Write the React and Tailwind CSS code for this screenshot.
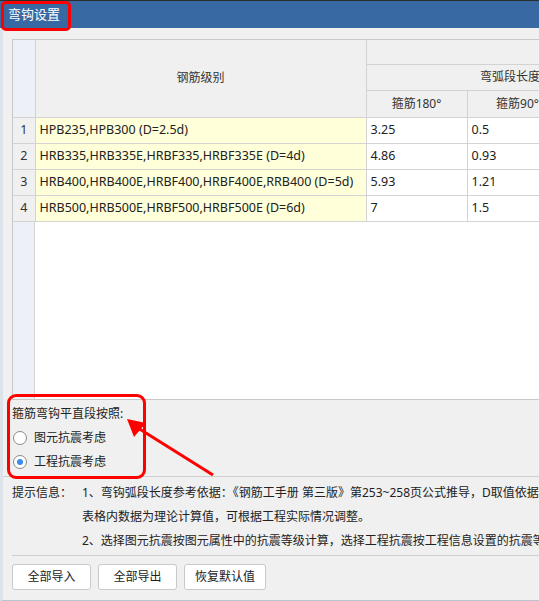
import React from 'react';

const rows = [
  { n: 1, grade: 'HPB235,HPB300 (D=2.5d)', a: '3.25', b: '0.5' },
  { n: 2, grade: 'HRB335,HRB335E,HRBF335,HRBF335E (D=4d)', a: '4.86', b: '0.93' },
  { n: 3, grade: 'HRB400,HRB400E,HRBF400,HRBF400E,RRB400 (D=5d)', a: '5.93', b: '1.21' },
  { n: 4, grade: 'HRB500,HRB500E,HRBF500,HRBF500E (D=6d)', a: '7', b: '1.5' },
];

function Radio({ checked, label }) {
  return (
    <label className="flex items-center h-6 gap-[7px] pl-[1px]">
      <span className="w-[14px] h-[14px] rounded-full border border-[#8a8a8a] bg-white flex items-center justify-center">
        {checked && <span className="w-[6px] h-[6px] rounded-full bg-[#3b8cf0]" />}
      </span>
      <span>{label}</span>
    </label>
  );
}

export default function App() {
  const font = { fontFamily: '"Noto Sans", "Noto Sans CJK SC", sans-serif' };
  return (
    <div className="relative w-[539px] h-[601px] overflow-hidden bg-[#f0f0f0] text-[12px] text-[#222]" style={font}>
      {/* Title bar */}
      <div className="h-[28px] bg-[#3869a2] border-t border-[#2c2c2c] flex items-center pl-[8px] text-white text-[13px]">
        弯钩设置
      </div>

      <div className="border-l-[3px] border-[#dde3ea] border-b border-b-[#b9c3cf] h-[573px] flex flex-col pl-[9px]">
        {/* Grid */}
        <div className="mt-[11px] h-[361px] w-[560px] border-t border-l border-[#c8c8c8] border-b bg-white flex flex-col">
          <table className="border-collapse table-fixed text-[12.5px]" style={{ width: 655 }}>
            <colgroup>
              <col style={{ width: 22 }} />
              <col style={{ width: 331 }} />
              <col style={{ width: 101 }} />
              <col style={{ width: 101 }} />
              <col style={{ width: 100 }} />
            </colgroup>
            <thead>
              <tr className="h-[24px]">
                <th rowSpan={3} className="bg-[#edf1f7] border-r border-b border-[#d3d3d3]" />
                <th rowSpan={3} className="bg-[#f0f0f0] border-r border-b border-[#d3d3d3] font-normal text-[12px] text-[#333]">钢筋级别</th>
                <th colSpan={3} className="bg-[#f0f0f0] border-b border-[#d3d3d3]" />
              </tr>
              <tr className="h-[26px]">
                <th colSpan={3} className="bg-[#f0f0f0] border-b border-[#d3d3d3] font-normal text-[12px] text-[#333] whitespace-nowrap">弯弧段长度(d)</th>
              </tr>
              <tr className="h-[27px]">
                <th className="bg-[#f0f0f0] border-r border-b border-[#d3d3d3] font-normal text-[12px] text-[#333]">箍筋180°</th>
                <th className="bg-[#f0f0f0] border-r border-b border-[#d3d3d3] font-normal text-[12px] text-[#333]">箍筋90°</th>
                <th className="bg-[#f0f0f0] border-b border-[#d3d3d3] font-normal text-[12px] text-[#333]">直筋</th>
              </tr>
            </thead>
            <tbody>
              {rows.map((r) => (
                <tr key={r.n} className="h-[26px]">
                  <td className="bg-[#f0f0f0] border-r border-b border-[#d3d3d3] text-center text-[#333]">{r.n}</td>
                  <td className="bg-[#ffffd9] border-r border-b border-[#d3d3d3] pl-[4px] whitespace-nowrap">{r.grade}</td>
                  <td className="border-r border-b border-[#d3d3d3] pl-[4px]">{r.a}</td>
                  <td className="border-r border-b border-[#d3d3d3] pl-[4px]">{r.b}</td>
                  <td className="border-b border-[#d3d3d3]" />
                </tr>
              ))}
            </tbody>
          </table>
          <div className="flex-1 flex">
            <div className="w-[22px] bg-[#edf1f7] border-r border-[#d3d3d3]" />
            <div className="flex-1 bg-white" />
          </div>
        </div>

        {/* Option group */}
        <div className="pt-[2px] pb-[2px]">
          <div className="h-6 flex items-center">箍筋弯钩平直段按照:</div>
          <Radio label="图元抗震考虑" />
          <Radio checked label="工程抗震考虑" />
        </div>

        <div className="h-px bg-[#cfcfcf] -ml-[9px]" />

        {/* Hints */}
        <div className="pt-[4px] flex whitespace-nowrap leading-[24px]">
          <div className="w-[70px] shrink-0">提示信息：</div>
          <div>
            <div>1、弯钩弧段长度参考依据：《钢筋工手册 第三版》第253~258页公式推导，D取值依据规范要求</div>
            <div>表格内数据为理论计算值，可根据工程实际情况调整。</div>
            <div>2、选择图元抗震按图元属性中的抗震等级计算，选择工程抗震按工程信息设置的抗震等级计算</div>
          </div>
        </div>

        <div className="h-px bg-[#cfcfcf] mt-[2px]" />

        {/* Buttons */}
        <div className="flex gap-[7px] mt-[8px]">
          <button className="w-[79px] h-[26px] bg-white border border-[#c9c9c9] rounded-[3px]">全部导入</button>
          <button className="w-[79px] h-[26px] bg-white border border-[#c9c9c9] rounded-[3px]">全部导出</button>
          <button className="w-[82px] h-[26px] bg-white border border-[#c9c9c9] rounded-[3px]">恢复默认值</button>
        </div>
      </div>

      {/* Annotations */}
      <div className="absolute left-[1px] top-[1px] w-[70px] h-[30px] border-[3px] border-[#ff0000] rounded-[5px]" />
      <div className="absolute left-[7px] top-[394px] w-[139px] h-[85px] border-[3px] border-[#ff0000] rounded-[9px]" />
      <svg className="absolute left-0 top-0" width="539" height="601">
        <line x1="138" y1="428" x2="213" y2="475" stroke="#ff0000" strokeWidth="3" />
        <polygon points="127,419 146,423 134,437" fill="#ff0000" />
      </svg>
    </div>
  );
}
